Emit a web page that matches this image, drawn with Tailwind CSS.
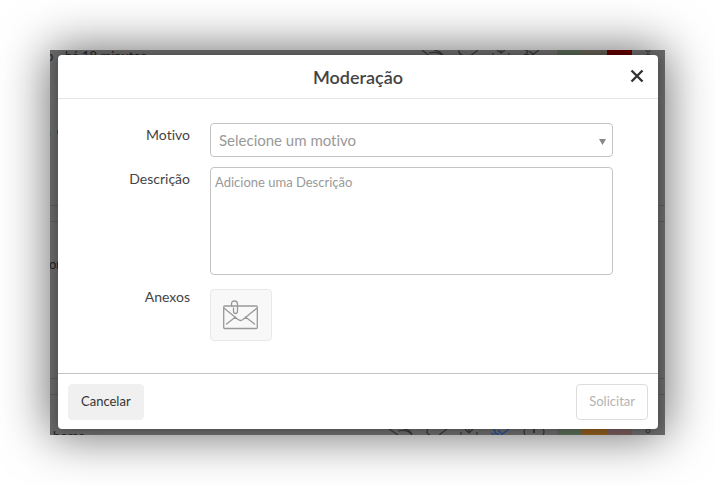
<!DOCTYPE html>
<html lang="pt-BR">
<head>
    <meta charset="UTF-8">
    <meta name="viewport" content="width=device-width, initial-scale=1.0">
    <title>Moderação</title>
    <script src="https://cdn.jsdelivr.net/npm/@tailwindcss/browser@4"></script>
</head>
<body class="bg-white p-[50px] font-['Lato',sans-serif] text-[#444] [font-variant-ligatures:none]">
    <div class="relative overflow-hidden bg-[#666] pt-[5px] pr-[7px] pb-[6px] pl-2 shadow-[0_0_46px_rgba(0,0,0,0.6)]">

        <!-- Lista atrás do modal -->
        <div class="absolute inset-0 text-[13px] leading-4 text-[#222]" aria-hidden="true">
            <span class="absolute -top-[2px] -left-[4px]">o</span>
            <span class="absolute -top-[2px] left-[15px] whitespace-nowrap">há 18 minutos</span>
            <span class="absolute top-[74px] -left-[6px] font-bold whitespace-nowrap text-[#111]">a&nbsp; C</span>
            <span class="absolute top-[206px] -left-[1px]">on</span>
            <span class="absolute bottom-[-9px] left-[3px]">horas</span>
            <div class="absolute inset-x-0 top-[155px] h-[17px] border-y border-[#575757]"></div>
            <div class="absolute inset-x-0 top-[328px] h-[17px] border-y border-[#575757]"></div>

            <svg class="absolute top-0 right-[120px]" width="125" height="6" fill="none" stroke="#333" stroke-width="1.2">
                <path d="M2 0l9 7M9 3q10-2 14 3M14 0q6 1 9 5M39 0q-1 4 5 6M58 0l-8 6M73 3v3M77 0l4 3 4-3M81 0v3M89 3v3M105 0q4 1 2 2.500t3 3M104 4l4 2M112 5l7-5M109 1l5 4"/>
            </svg>
            <div class="absolute top-0 right-[33px] flex h-[6px]">
                <div class="w-[25px] bg-[#52614f]"></div>
                <div class="w-[25px] bg-[#5e5a51]"></div>
                <div class="w-[25px] bg-[#5e0000]"></div>
            </div>
            <svg class="absolute top-0 right-[12px]" width="10" height="6" fill="none" stroke="#333"><circle cx="5" cy="0" r="2"/><circle cx="5" cy="6" r="2"/></svg>

            <svg class="absolute right-[120px] bottom-0" width="160" height="6" fill="none" stroke="#333" stroke-width="1.2">
                <path d="M4 0l9 6M13 2q10-2 14 4M19 0q6 1 8 5M43 0q-3 4 2 6M62 0l-8 6M76 3v3M80 0l4 4 4-4M84 0v4M92 3v3M140 0q-2 3 0 6M158 0q2 3 0 6"/>
                <path d="M149 0v4" stroke-width="2"/>
                <path d="M108 1q3 0 2 2t4 2M106 4l3 2M113 1l4 4M124 0l-8 6" stroke="#234a8c" stroke-width="1.4"/>
            </svg>
            <div class="absolute right-[33px] bottom-0 flex h-[6px]">
                <div class="w-[25px] bg-[#566553]"></div>
                <div class="w-[25px] bg-[#87571c]"></div>
                <div class="w-[25px] bg-[#705657]"></div>
            </div>
            <svg class="absolute right-[12px] bottom-0" width="10" height="6" fill="none" stroke="#333"><circle cx="5" cy="2" r="2"/></svg>
        </div>

        <!-- Modal -->
        <form role="dialog" aria-labelledby="titulo" class="relative rounded bg-white shadow-[0_0_12px_rgba(0,0,0,0.35)]" onsubmit="event.preventDefault()">
            <header class="relative flex h-11 items-center justify-center border-b border-[#e5e5e5]">
                <h1 id="titulo" class="text-lg font-semibold">Moderação</h1>
                <button type="button" aria-label="Fechar" class="absolute top-[14px] right-[14px] cursor-pointer">
                    <svg width="14" height="14" viewBox="0 0 14 14" fill="none" stroke="#333" stroke-width="2.4"><path d="M1.5 1.5l11 11M12.5 1.5l-11 11"/></svg>
                </button>
            </header>

            <div class="grid grid-cols-[132px_1fr] gap-x-5 gap-y-[10px] pt-6 pr-[45px] pb-8">
                <label for="motivo" class="text-right text-sm leading-6">Motivo</label>
                <div class="relative">
                    <select id="motivo" class="block h-[34px] w-full appearance-none rounded border border-[#c4c4c4] bg-white px-2 text-[15px] text-[#999]">
                        <option>Selecione um motivo</option>
                    </select>
                    <svg class="pointer-events-none absolute top-4 right-[7px]" width="7" height="6" fill="#888"><path d="M0 0h7l-3.5 6z"/></svg>
                </div>

                <label for="descricao" class="text-right text-sm leading-6">Descrição</label>
                <textarea id="descricao" placeholder="Adicione uma Descrição" class="block h-[108px] w-full resize-none rounded border border-[#c4c4c4] px-1 py-[5px] text-[13px] placeholder:text-[#999]"></textarea>

                <label for="anexos" class="text-right text-sm leading-6">Anexos</label>
                <button type="button" id="anexos" class="mt-1 flex h-[52px] w-[62px] cursor-pointer items-center justify-center rounded border border-[#e8e8e8] bg-[#f8f8f8]">
                    <svg width="36" height="30" viewBox="0 0 36 30" fill="none" stroke="#999" stroke-width="1.3" stroke-linecap="round" stroke-linejoin="round">
                        <rect x="0.7" y="6" width="33.600" height="22.500" rx="1"/>
                        <path d="M1.5 8.500l13.500 11q2.500 2 5 0l13.500-11M3.500 24l9-7M31.500 24l-9-7"/>
                        <path d="M8.500 6V4q0-3 3-3t3 3v7q0 2.500-2 2.500t-2-2.500V8"/>
                    </svg>
                </button>
            </div>

            <footer class="flex justify-between border-t border-[#c4c4c4] px-[10px] pt-[10px] pb-[9px]">
                <button type="button" class="h-9 cursor-pointer rounded border border-[#f0f0f0] bg-[#f0f0f0] px-3 text-[13px] text-[#333]">Cancelar</button>
                <button type="submit" disabled class="h-9 rounded border border-[#ddd] bg-white px-3 text-[13px] text-[#b3b3b3]">Solicitar</button>
            </footer>
        </form>
    </div>
</body>
</html>
